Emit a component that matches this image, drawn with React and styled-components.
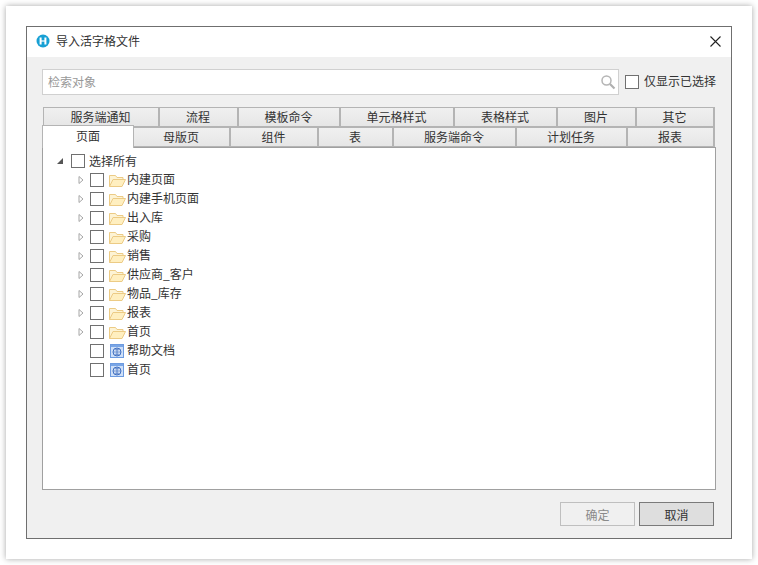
import React from 'react'
import styled, { createGlobalStyle } from 'styled-components'

const Global = createGlobalStyle`
  html, body { margin: 0; padding: 0; background: #fff; }
  body { font-family: "Noto Sans CJK SC", "Microsoft YaHei", sans-serif; font-size: 12px; color: #333; }
`

const Page = styled.div`
  width: 758px;
  height: 565px;
  box-sizing: border-box;
  padding: 6px;
  overflow: hidden;
`

const Sheet = styled.div`
  height: 553px;
  box-sizing: border-box;
  padding: 20px;
  background: #fff;
  box-shadow: 0 0 6px rgba(0, 0, 0, 0.35);
`

const Dialog = styled.div`
  height: 513px;
  box-sizing: border-box;
  border: 1px solid #6f6f6f;
  background: #f0f0f0;
  display: flex;
  flex-direction: column;
`

const TitleBar = styled.div`
  height: 30px;
  flex: none;
  box-sizing: border-box;
  background: #fff;
  display: flex;
  align-items: center;
  padding: 0 10px 2px 9px;
  gap: 6px;
  color: #333;
`

const Title = styled.span`
  flex: 1;
  padding-bottom: 1px;
`

const Close = styled.svg`
  width: 11px;
  height: 11px;
  stroke: #222;
  stroke-width: 1.1;
`

const Body = styled.div`
  flex: 1;
  display: flex;
  flex-direction: column;
  padding: 12px 15px;
  min-height: 0;
`

const SearchRow = styled.div`
  display: flex;
  align-items: center;
  height: 26px;
  margin-bottom: 12px;
`

const SearchBox = styled.div`
  width: 577px;
  height: 26px;
  box-sizing: border-box;
  border: 1px solid #d0d0d0;
  background: #fff;
  display: flex;
  align-items: center;
  padding: 0 2px 0 5px;
  color: #999;
`

const SearchText = styled.span`
  flex: 1;
  padding-bottom: 2px;
`

const Box = styled.span`
  display: block;
  flex: none;
  width: 14px;
  height: 14px;
  box-sizing: border-box;
  border: 1px solid #707070;
  background: #fff;
`

const OnlySelected = styled.label`
  display: flex;
  align-items: center;
  gap: 5px;
  margin-left: 6px;
`

const OnlySelectedText = styled.span`
  padding-bottom: 3px;
`

const TabRow = styled.div`
  display: flex;
  height: 20px;
  padding-left: ${p => p.$indent}px;
  box-sizing: border-box;
`

const Tab = styled.div`
  width: ${p => p.$w}px;
  box-sizing: border-box;
  height: ${p => (p.$active ? 23 : 20)}px;
  margin-top: ${p => (p.$active ? -2 : 0)}px;
  padding-bottom: ${p => (p.$active ? 3 : 2)}px;
  padding-right: ${p => (p.$active ? 0 : 1)}px;
  display: flex;
  align-items: center;
  justify-content: center;
  border: 1px solid #b4b4b4;
  border-left-width: ${p => (p.$first ? 1 : 0)}px;
  border-right-width: ${p => (p.$active ? 1 : 2)}px;
  border-bottom-width: ${p => (p.$active ? 0 : 1)}px;
  background: ${p => (p.$active ? '#fff' : 'linear-gradient(#f0f0f0, #e6e6e6)')};
  position: relative;
  z-index: ${p => (p.$active ? 2 : 1)};
`

const Panel = styled.div`
  width: 674px;
  height: 343px;
  box-sizing: border-box;
  border: 1px solid #a0a0a0;
  background: #fff;
  padding: 4px 0 0 12px;
`

const TreeRow = styled.div`
  height: ${p => p.$h}px;
  display: flex;
  align-items: center;
  padding-left: ${p => p.$indent}px;
`

const Arrow = styled.svg`
  width: 10px;
  height: 10px;
  flex: none;
  margin-right: ${p => p.$gap}px;
`

const ArrowGap = styled.span`
  width: 14px;
  flex: none;
`

const RowIcon = styled.svg`
  width: 18px;
  height: 16px;
  flex: none;
  margin-left: 5px;
`

const RowLabel = styled.span`
  padding-bottom: 2px;
`

const RootLabel = styled.span`
  margin-left: 4px;
  padding-bottom: 1px;
`

const Footer = styled.div`
  margin-top: 12px;
  display: flex;
  justify-content: flex-end;
  gap: 4px;
  padding-right: 2px;
`

const Button = styled.button`
  width: 75px;
  height: 24px;
  box-sizing: border-box;
  padding: 0;
  font: inherit;
  border: 1px solid ${p => (p.disabled ? '#bfbfbf' : '#7a7a7a')};
  background: ${p => (p.disabled ? '#f0f0f0' : '#dedede')};
  color: ${p => (p.disabled ? '#8a8a8a' : '#333')};
`

const Logo = () => (
  <svg width="14" height="14" viewBox="0 0 14 14">
    <circle cx="7" cy="7" r="6.5" fill="#17a0d4" />
    <path d="M4.6 3.4v7.2M9.4 3.4v7.2" stroke="#fff" strokeWidth="2" fill="none" />
    <path d="M5 7h4" stroke="#fff" strokeWidth="1.2" fill="none" />
  </svg>
)

const Magnifier = () => (
  <svg width="16" height="16" viewBox="0 0 16 16" fill="none">
    <circle cx="6.5" cy="6.5" r="4.5" stroke="#b5b5b5" strokeWidth="1.5" />
    <path d="M10 10l4.5 4.5" stroke="#b0b0b0" strokeWidth="2.2" />
  </svg>
)

const Folder = () => (
  <RowIcon viewBox="0 0 18 16" fill="none">
    <path d="M0.5 14.5V3.5h6l1.5 2h6v2.5" stroke="#eccb85" fill="#fdf3d4" />
    <path d="M0.5 14.5l3.5-7h12.5l-3.5 7z" stroke="#eccb85" fill="#ffefc0" />
  </RowIcon>
)

const PageIcon = () => (
  <RowIcon viewBox="0 0 18 16" fill="none">
    <rect x="1.5" y="1.5" width="13" height="13" fill="#cfe0f8" stroke="#6d9be0" />
    <rect x="2" y="2" width="12" height="2" fill="#7aa6e6" />
    <circle cx="8" cy="9" r="4" fill="#eaf2fd" stroke="#3f6fc0" />
    <path d="M4 9h8M8 5v8M5.5 6.8h5M5.5 11.2h5" stroke="#3f6fc0" strokeWidth="0.8" />
  </RowIcon>
)

const topTabs = [
  ['服务端通知', 117], ['流程', 79], ['模板命令', 102], ['单元格样式', 114],
  ['表格样式', 103], ['图片', 79], ['其它', 78],
]
const bottomTabs = [
  ['页面', 92], ['母版页', 97], ['组件', 88], ['表', 75],
  ['服务端命令', 123], ['计划任务', 111], ['报表', 87],
]
const folders = ['内建页面', '内建手机页面', '出入库', '采购', '销售', '供应商_客户', '物品_库存', '报表', '首页']
const pages = ['帮助文档', '首页']

const App = () => (
  <>
    <Global />
    <Page>
      <Sheet>
        <Dialog>
          <TitleBar>
            <Logo />
            <Title>导入活字格文件</Title>
            <Close viewBox="0 0 11 11"><path d="M0.5 0.5l10 10M10.5 0.5l-10 10" /></Close>
          </TitleBar>
          <Body>
            <SearchRow>
              <SearchBox>
                <SearchText>检索对象</SearchText>
                <Magnifier />
              </SearchBox>
              <OnlySelected><Box /><OnlySelectedText>仅显示已选择</OnlySelectedText></OnlySelected>
            </SearchRow>
            <TabRow $indent={1}>
              {topTabs.map(([t, w], i) => <Tab key={t} $w={w} $first={i === 0}>{t}</Tab>)}
            </TabRow>
            <TabRow $indent={0}>
              {bottomTabs.map(([t, w], i) => <Tab key={t} $w={w} $first={i === 0} $active={i === 0}>{t}</Tab>)}
            </TabRow>
            <Panel>
              <TreeRow $h={18} $indent={0}>
                <Arrow viewBox="0 0 10 10" $gap={6}><path d="M8 2v6H2z" fill="#555" /></Arrow>
                <Box />
                <RootLabel>选择所有</RootLabel>
              </TreeRow>
              {folders.map(t => (
                <TreeRow key={t} $h={19} $indent={21}>
                  <Arrow viewBox="0 0 10 10" $gap={4}><path d="M3 1.5l4 3.5-4 3.5z" fill="#fff" stroke="#a6a6a6" /></Arrow>
                  <Box />
                  <Folder />
                  <RowLabel>{t}</RowLabel>
                </TreeRow>
              ))}
              {pages.map(t => (
                <TreeRow key={t} $h={19} $indent={21}>
                  <ArrowGap />
                  <Box />
                  <PageIcon />
                  <RowLabel>{t}</RowLabel>
                </TreeRow>
              ))}
            </Panel>
            <Footer>
              <Button disabled>确定</Button>
              <Button>取消</Button>
            </Footer>
          </Body>
        </Dialog>
      </Sheet>
    </Page>
  </>
)

export default App
